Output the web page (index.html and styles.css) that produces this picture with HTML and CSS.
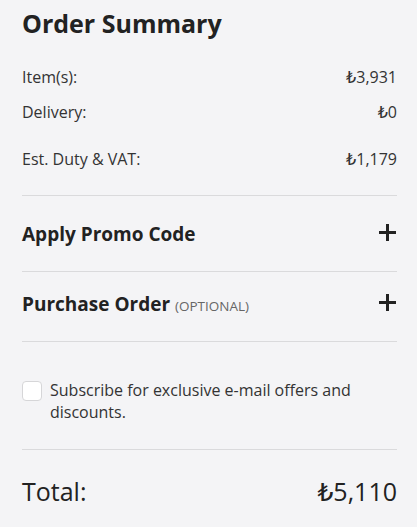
FILE: index.html
```html
<!DOCTYPE html>
<html lang="en">
<head>
	<meta charset="UTF-8">
	<title>Order Summary</title>
	<link rel="stylesheet" href="styles.css">
</head>
<body>
	<div class="summary">
		<h2 class="summary_title">Order Summary</h2>

		<div class="rows">
			<div class="row"><span>Item(s):</span><span>₺3,931</span></div>
			<div class="row"><span>Delivery:</span><span>₺0</span></div>
			<div class="row row_duty"><span>Est. Duty &amp; VAT:</span><span>₺1,179</span></div>
		</div>

		<div class="toggle">
			<span class="toggle_name">Apply Promo Code</span>
			<span class="plus"></span>
		</div>

		<div class="toggle toggle_po">
			<span class="toggle_name">Purchase Order <small>(OPTIONAL)</small></span>
			<span class="plus"></span>
		</div>

		<label class="subscribe">
			<span class="box"></span>
			<span>Subscribe for exclusive e-mail offers and discounts.</span>
		</label>

		<div class="total">
			<span>Total:</span>
			<span>₺5,110</span>
		</div>
	</div>
</body>
</html>
```

FILE: styles.css
```css
body,h2{
	margin:0;
	padding:0;
}

body{
	background-color:#f4f4f6;
	font-family:"Open Sans","DejaVu Sans",sans-serif;
	color:#222;
}

.summary{
	padding:6px 20px 0 22px;
}

.summary_title{
	font-size:25px;
	font-weight:700;
	line-height:34px;
}

.rows{
	padding:26px 0 25px;
	border-bottom:1px solid #dadadc;
}

.row{
	display:flex;
	justify-content:space-between;
	font-size:16px;
	line-height:22px;
	color:#333;
	margin-top:13px;
}

.row:first-child{
	margin-top:0;
}

.row_duty{
	margin-top:25px;
}

.toggle{
	display:flex;
	justify-content:space-between;
	align-items:center;
	padding:25px 0 24px;
	border-bottom:1px solid #dadadc;
}

.toggle_po{
	padding-top:19px;
}

.toggle_name{
	display:block;
	height:26px;
	font-size:19px;
	font-weight:700;
	line-height:26px;
}

.toggle_name small{
	font-size:13.5px;
	font-weight:400;
	line-height:1;
	color:#666;
}

.plus{
	width:17px;
	height:17px;
	margin:0 1px 3px 0;
	position:relative;
}

.plus:before,.plus:after{
	content:"";
	position:absolute;
	background-color:#222;
}

.plus:before{
	left:0;
	top:7px;
	width:17px;
	height:3px;
}

.plus:after{
	left:7px;
	top:0;
	width:3px;
	height:17px;
}

.subscribe{
	display:flex;
	gap:8px;
	align-items:flex-start;
	padding:37px 0 26px;
	font-size:16px;
	line-height:22px;
	color:#333;
	border-bottom:1px solid #dadadc;
}

.box{
	flex:none;
	width:20px;
	height:20px;
	margin-top:2px;
	background-color:#fff;
	border:1px solid #d6d6d8;
	border-radius:4px;
	box-sizing:border-box;
}

.total{
	display:flex;
	justify-content:space-between;
	padding-top:24px;
	font-size:25px;
	line-height:34px;
	color:#222;
}
```
